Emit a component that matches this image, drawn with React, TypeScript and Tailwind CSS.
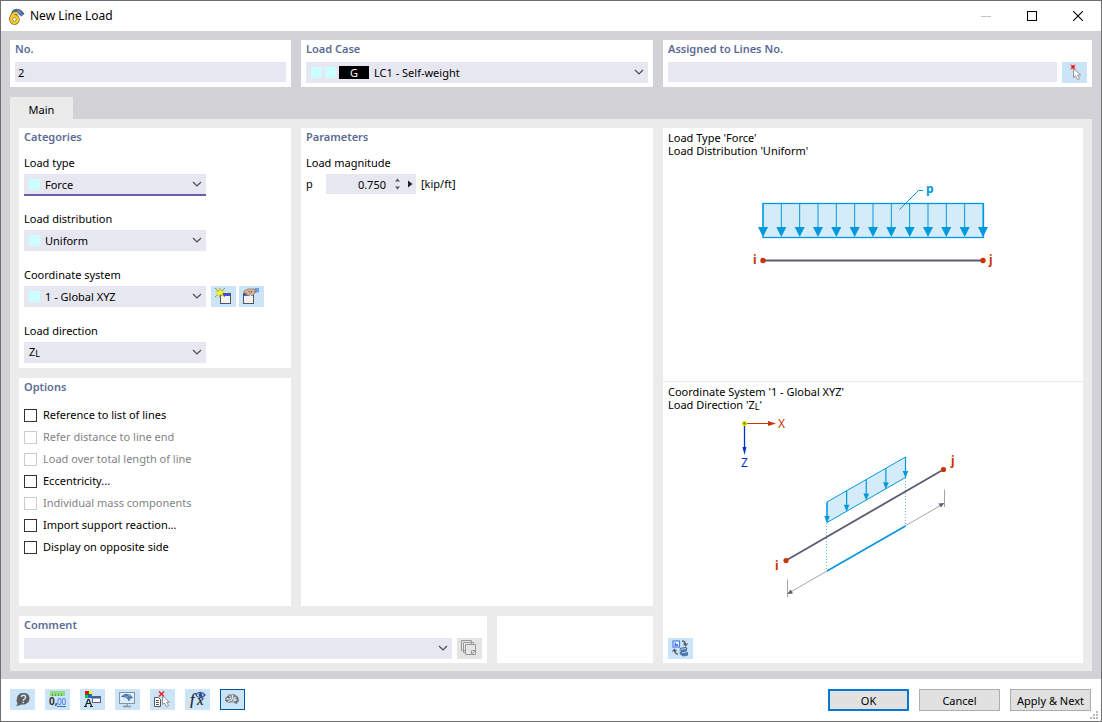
import { useState } from "react"
import type { ReactNode } from "react"

const options = [
  { label: "Reference to list of lines", disabled: false },
  { label: "Refer distance to line end", disabled: true },
  { label: "Load over total length of line", disabled: true },
  { label: "Eccentricity...", disabled: false },
  { label: "Individual mass components", disabled: true },
  { label: "Import support reaction...", disabled: false },
  { label: "Display on opposite side", disabled: false },
]

function Card({ title, className = "", children }: { title?: string; className?: string; children?: ReactNode }) {
  return (
    <section className={`bg-white px-[5px] ${className}`}>
      {title && <h2 className="h-[18px] leading-[18px] font-semibold text-[#5b6b94]">{title}</h2>}
      {children}
    </section>
  )
}

function Swatch() {
  return <span className="h-[11px] w-[11px] bg-[#ccffff]" />
}

// Z with a small subscript L, the local Z axis
function LocalZ() {
  return (
    <>
      Z<sub className="bottom-[-1px] text-[9px]">L</sub>
    </>
  )
}

interface ComboProps {
  id: string
  label?: string
  value: string
  className?: string
  children?: ReactNode
}

function Combo({ id, label, value, className = "", children }: ComboProps) {
  return (
    <div className="relative min-w-0 flex-1">
      <select
        id={id}
        aria-label={label}
        className={`block h-[21px] w-full appearance-none bg-[#e7e7f1] pt-0.5 pr-6 outline-none ${className}`}
      >
        <option aria-label={value || "None"}>{value}</option>
      </select>
      <div className="pointer-events-none absolute inset-y-0 left-[5px] flex items-center gap-[3px]">{children}</div>
      <svg className="pointer-events-none absolute top-[7px] right-[4px]" width="10" height="7" viewBox="0 0 10 7">
        <path d="M1 1L5 5L9 1" fill="none" stroke="#4d4d4d" strokeWidth="1.2" />
      </svg>
    </div>
  )
}

function IconButton({ label, className = "bg-[#cce4f7]", children }: { label: string; className?: string; children: ReactNode }) {
  return (
    <button type="button" aria-label={label} className={`flex h-[21px] w-[25px] shrink-0 items-center justify-center ${className}`}>
      {children}
    </button>
  )
}

function CursorIcon() {
  return (
    <svg width="17" height="17" viewBox="0 0 17 17">
      <path d="M4.500 .5l5 5M9.500 .5l-5 5" stroke="#ff8a8a" strokeWidth="1.200" />
      <path d="M5.500 1.500l3 3M8.500 1.500l-3 3" stroke="#f01010" strokeWidth="1.600" />
      <path d="M7.500 4.500v9l2-1.800 2 4 2-1-1.800-3.700h3z" fill="#fff" stroke="#8a8a8a" strokeWidth=".9" />
    </svg>
  )
}

function ListCursorIcon() {
  return (
    <svg width="17" height="17" viewBox="0 0 17 17">
      <path d="M.5 6.500h4l2 2v7h-6z" fill="#fff" stroke="#555" />
      <path d="M2 9.500h3M2 11.500h3M2 13.500h3" stroke="#555" />
      <path d="M5 .5l5 5M10 .5l-5 5" stroke="#f01818" strokeWidth="1.400" />
      <path d="M8.500 5v8.500l2-1.700 2 4 2-1-1.800-3.600h2.600z" fill="#fff" stroke="#8a8a8a" strokeWidth=".9" />
    </svg>
  )
}

function NewWindowIcon() {
  return (
    <svg width="17" height="17" viewBox="0 0 17 17">
      <rect x="5.500" y="5.500" width="10" height="10" fill="#f4f4f4" stroke="#555" />
      <path d="M6 6h9v2H6z" fill="#3454f0" />
      <path d="M0 0l10 9M10 0L0 9M5 0v10" stroke="#77772c" strokeWidth=".8" />
      <path d="M5 .5l1.200 2.700h3.300L7.300 5.200l.9 3L5 6.600l-3.200 1.600.9-3L.5 3.200h3.300z" fill="#ffff20" stroke="#c2c230" strokeWidth=".5" />
    </svg>
  )
}

function EditWindowIcon() {
  return (
    <svg width="17" height="17" viewBox="0 0 17 17">
      <rect x=".5" y="5.500" width="10" height="10" fill="#f1f1f1" stroke="#555" />
      <path d="M1 6h4v2H1z" fill="#3454f0" />
      <path d="M12 0h4v4l-4 1z" fill="#6f9fdd" />
      <path d="M1 3l4-2h7v4l-2 2-1 1-1.500-1.500L6 8 5 6.500 3.500 8V5.500L1 5z" fill="#d8b49c" stroke="#8e7768" strokeWidth=".8" />
      <path d="M5 3.500h5M6 5l3-.5" stroke="#8e7768" strokeWidth=".7" />
    </svg>
  )
}

function LoadDiagram() {
  const arrows = Array.from({ length: 13 }, (_, i) => 763 + (i * 220) / 12)
  return (
    <svg className="mx-auto mt-5 block" width="240" height="94" viewBox="753 177 240 94">
      <rect x="763" y="203.500" width="220.500" height="34" fill="#d4ecf9" stroke="#0099de" strokeWidth="1.300" />
      {arrows.map((x) => (
        <g key={x} fill="#0099de">
          <path d={`M${x} 203V228`} stroke="#0099de" />
          <path d={`M${x - 5} 227h10l-5 10z`} />
        </g>
      ))}
      <path d="M899.500 209.500L918.500 190.500H923" fill="none" stroke="#0099de" />
      <path d="M763 260.500H983" stroke="#5c5a70" strokeWidth="2" />
      <circle cx="763" cy="260.500" r="2.700" fill="#cc3300" />
      <circle cx="983" cy="260.500" r="2.700" fill="#cc3300" />
      <g fontSize="12" fontWeight="700">
        <text x="926" y="193" fill="#0099de">p</text>
        <text x="753" y="264" fill="#cc3300">i</text>
        <text x="989" y="264" fill="#cc3300">j</text>
      </g>
    </svg>
  )
}

function DirectionDiagram() {
  const arrows = [0, 1, 2, 3, 4].map((i) => ({ x: 827 + i * 19.625, y: 502 - i * 11.25 }))
  return (
    <svg className="mx-auto block" width="268" height="191" viewBox="739 411 268 191">
      <path d="M744.500 423.500H768" stroke="#cc3300" />
      <path d="M768 421v5l8-2.500z" fill="#cc3300" />
      <path d="M744.500 423.500V448" stroke="#0033cc" strokeWidth="1.300" />
      <path d="M742.500 447h4l-2 8z" fill="#0033cc" />
      <circle cx="744.500" cy="423.500" r="2" fill="#59a800" stroke="#ffe600" strokeWidth="1.200" />
      <path d="M827 502L905.500 457V477.500L827 522.500z" fill="#d4ecf9" stroke="#0099de" />
      {arrows.map((a) => (
        <g key={a.x} fill="#0099de">
          <path d={`M${a.x} ${a.y}v14`} stroke="#0099de" strokeWidth="1.200" />
          <path d={`M${a.x - 2.8} ${a.y + 14}h5.600l-2.800 7z`} />
        </g>
      ))}
      <path d="M826.500 523V571M905.500 478V526" stroke="#59bfe9" strokeDasharray="1 2" />
      <path d="M786 560.500L943.500 469.500" stroke="#5c5a70" strokeWidth="1.800" />
      <circle cx="786" cy="560.500" r="2.600" fill="#cc3300" />
      <circle cx="943.500" cy="469.500" r="2.600" fill="#cc3300" />
      <path d="M788 593.500L944 503.500M787.500 579.500V597M944.500 489.500V507" stroke="#8c8b99" strokeWidth=".8" />
      <path d="M787.500 594l3-4.500 2.500 4zM944 503l-3 4.500-2.500-4z" fill="#5c5a70" />
      <path d="M827 571L905.500 526" stroke="#0099de" strokeWidth="1.500" />
      <g fontSize="12">
        <text x="778" y="428" fill="#cc3300">X</text>
        <text x="741" y="467" fill="#0033cc">Z</text>
      </g>
      <g fontSize="12" fontWeight="700" fill="#cc3300">
        <text x="775" y="570">i</text>
        <text x="951" y="465">j</text>
      </g>
    </svg>
  )
}

function TitleBar() {
  return (
    <header className="flex h-[30px] items-center bg-white pl-2 text-xs">
      <svg width="16" height="17" viewBox="0 0 16 17" aria-hidden="true">
        <path d="M2.500 4C5 0 11-1 15.500 6l-3.500 2.500L9 5 3 6z" fill="#416398" />
        <path d="M4 3l8 5M8 1l5 6M13 2L7 6" stroke="#91aacf" strokeWidth=".8" />
        <path d="M8.500 5C4 4.500 2 8 2 11.500" fill="none" stroke="#6f5b20" strokeWidth="3.600" />
        <circle cx="5.500" cy="11.500" r="3.300" fill="#fff" stroke="#6f5b20" strokeWidth="3.800" />
        <path d="M8.500 5C4 4.500 2 8 2 11.500" fill="none" stroke="#f5cd31" strokeWidth="2.200" />
        <circle cx="5.500" cy="11.500" r="3.300" fill="none" stroke="#f5cd31" strokeWidth="2.600" />
      </svg>
      <h1 className="ml-[5px] flex-1">New Line Load</h1>
      <button type="button" aria-label="Minimize" disabled className="flex h-full w-[46px] items-center justify-center">
        <svg width="10" height="10"><path d="M0 5.500H10" stroke="#c4c4c4" /></svg>
      </button>
      <button type="button" aria-label="Maximize" className="flex h-full w-[46px] items-center justify-center">
        <svg width="10" height="10"><rect x=".5" y=".5" width="9" height="9" fill="none" stroke="#000" /></svg>
      </button>
      <button type="button" aria-label="Close" className="flex h-full w-[46px] items-center justify-center">
        <svg width="10" height="10"><path d="M0 0L10 10M10 0L0 10" stroke="#000" strokeWidth="1.100" /></svg>
      </button>
    </header>
  )
}

function Toolbar() {
  return (
    <div className="flex flex-1 gap-2.5">
      <IconButton label="Help">
        <svg width="15" height="15" viewBox="0 0 15 15">
          <path d="M8.500 1c4 0 6 2 6 5.500s-3 6-6 6c-2 0-3 0-4.500 1l-3 .5c1-1 1.500-2 1.500-3C1 9.500 1.500 8 2 6.500c0-3.500 3-5.500 6.500-5.500z" fill="#606060" />
          <path d="M6.500 5C6.500 2.500 11 2.500 10.500 5.500c0 1.500-2.200 1.500-2.200 3.200M8.300 9.700v1.500" fill="none" stroke="#cce4f7" strokeWidth="1.500" />
        </svg>
      </IconButton>
      <IconButton label="Units and Decimal Places">
        <svg width="17" height="17" viewBox="0 0 17 17">
          <path d="M1 0h15v5H1z" fill="#8fdd80" />
          <path d="M3.500 3v2M6.500 3v2M9.500 3v2M12.500 3v2" stroke="#52a448" />
          <text x="0" y="14" fontSize="10" fontWeight="600" fill="#222">0,</text>
          <text x="8" y="14" fontSize="8" fill="#336de0">00</text>
          <path d="M8 15.500h9" stroke="#336de0" />
        </svg>
      </IconButton>
      <IconButton label="Display Properties">
        <svg width="17" height="17" viewBox="0 0 17 17">
          <rect x="1" y="0" width="7" height="7" fill="#555" />
          <path d="M1 0h3v3H1z" fill="#f00" />
          <path d="M5 0h3v3H5z" fill="#ff0" />
          <path d="M1 4h3v3H1z" fill="#00c850" />
          <path d="M5 4h3v3H5z" fill="#16f" />
          <path d="M1.500 15L4 8.500h1L7.500 15M3 12.500h3.500M0 15.500h3M6 15.500h3" fill="none" stroke="#222" strokeWidth="1.200" />
          <rect x="8.500" y="5.500" width="8" height="6" fill="#fff" stroke="#5c627c" />
          <path d="M9 6h7v1.500H9z" fill="#3855b0" />
        </svg>
      </IconButton>
      <IconButton label="Visibility">
        <svg width="17" height="17" viewBox="0 0 17 17">
          <rect x=".5" y="1.500" width="15" height="11" fill="#dceefa" stroke="#87949e" />
          <path d="M8 13v2M4 15.500h8" stroke="#87949e" strokeWidth="1.300" />
          <path d="M2 6c3-4.500 9-4 12 1l-2.500.5c0 1-1 2-2 3C9.500 8 7 6 2 6z" fill="#426ba7" />
          <path d="M4.500 4l7 5M8.500 3l4 5M6 6.500l6-3" stroke="#91b1d4" strokeWidth=".7" />
        </svg>
      </IconButton>
      <IconButton label="Select Objects"><ListCursorIcon /></IconButton>
      <IconButton label="Formula">
        <svg width="17" height="17" viewBox="0 0 17 17">
          <g fontFamily="Liberation Serif, serif" fontStyle="italic" fill="#222" stroke="#222" strokeWidth=".2">
            <text x="1" y="14" fontSize="16">f</text>
            <text x="8" y="14" fontSize="15">x</text>
          </g>
          <path d="M7 4c2-3.500 6-3.500 9 0-3 3.500-7 3.500-9 0z" fill="#e4efff" stroke="#354b91" strokeWidth="1.200" />
          <circle cx="11.500" cy="4" r="1.900" fill="#25458d" />
        </svg>
      </IconButton>
      <IconButton label="Intelligent Input" className="border border-[#005499] bg-[#cce4f7]">
        <svg width="17" height="13" viewBox="0 0 17 13">
          <path d="M1.500 7.500C.5 6 1.500 3.500 3.500 3.500 3.500 1.500 6 .8 7.500 1.800 9 .5 11 1 11.500 2.500c2 0 3 1.300 2.800 2.700 1.500 1.500 1 3.600-.8 4 0 1.600-1.500 2.300-2.500 1.500C10 9.500 9 9 7.500 9.200 6 10.500 2.500 10 1.500 7.500z" fill="#85898d" />
          <path d="M2.500 6.500c1.500-1.500 3 .5 4.500-1.500M5 3c1 0 1.500.5 1.500 1.500M8.500 2v3c0 1.500-1.500 1.500-1.500 3M4 9c.5-1 1.500-1.300 2.500-1M11.500 3c0 1.500-1 1.500-1.500 2.500s1 1.500 2.500.5M9 8.500c1-1.500 2-1 3.500-1.500" fill="none" stroke="#d8eaf8" strokeWidth="1.100" />
          <path d="M3.500 3.500c1.500 0 2 .5 2 1.500M1.500 7.500c1 .8 2 .6 3 0M11.500 2.500l-.5 1.500M14.300 5.200l-1.800.8M13.500 9.200l-1.500-1" fill="none" stroke="#4f5357" strokeWidth=".9" />
        </svg>
      </IconButton>
    </div>
  )
}

export default function App() {
  const [lineNo, setLineNo] = useState("2")
  const [magnitude, setMagnitude] = useState("0.750")
  const [assigned, setAssigned] = useState("")

  return (
    <main className="flex min-h-screen flex-col border border-[#6f6f6f] bg-[#d2d1d6] font-['Noto_Sans','Open_Sans',sans-serif] text-[11px] text-black">
      <TitleBar />

      <div className="flex flex-1 flex-col px-[9px] pt-[9px] pb-2">
        <div className="flex gap-2.5">
          <Card title="No." className="h-[47px] w-[281px]">
            <input
              aria-label="No."
              className="mt-1 block h-5 w-full bg-[#e7e7f1] px-[3px] outline-none"
              value={lineNo}
              onChange={(e) => setLineNo(e.target.value)}
            />
          </Card>
          <Card title="Load Case" className="h-[47px] w-[352px]">
            <div className="mt-1 flex">
              <Combo id="load-case" label="Load Case" value="LC1 - Self-weight" className="pl-[68px]">
                <Swatch />
                <Swatch />
                <span className="h-[13px] w-[30px] bg-black text-center leading-[14px] text-white">G</span>
              </Combo>
            </div>
          </Card>
          <Card title="Assigned to Lines No." className="h-[47px] flex-1">
            <div className="mt-1 flex items-start gap-[5px]">
              <input
                aria-label="Assigned to Lines No."
                className="h-5 min-w-0 flex-1 bg-[#e7e7f1] px-[3px] outline-none"
                value={assigned}
                onChange={(e) => setAssigned(e.target.value)}
              />
              <IconButton label="Select lines"><CursorIcon /></IconButton>
            </div>
          </Card>
        </div>

        <div role="tablist" className="mt-2.5 flex">
          <button type="button" role="tab" aria-selected="true" className="h-[22px] w-[63px] bg-[#ebebeb] pt-1 leading-[18px]">
            Main
          </button>
        </div>

        <div className="flex flex-1 gap-2.5 bg-[#ebebeb] px-[9px] pt-[9px] pb-2">
          <div className="flex w-[634px] flex-col gap-2.5">
            <div className="flex flex-1 gap-2.5">
              <div className="flex w-[272px] flex-col gap-2.5">
                <Card title="Categories" className="h-60">
                  <div className="mt-[9px] flex flex-col gap-4">
                    <div>
                      <label htmlFor="load-type" className="mb-[3px] block leading-4">Load type</label>
                      <div className="flex w-[182px]">
                        <Combo
                          id="load-type"
                          value="Force"
                          className="border-b border-[#6661a6] pl-[21px] shadow-[0_1px_0_#6661a6]"
                        >
                          <Swatch />
                        </Combo>
                      </div>
                    </div>
                    <div>
                      <label htmlFor="load-distribution" className="mb-[3px] block leading-4">Load distribution</label>
                      <div className="flex w-[182px]">
                        <Combo id="load-distribution" value="Uniform" className="pl-[21px]"><Swatch /></Combo>
                      </div>
                    </div>
                    <div>
                      <label htmlFor="coordinate-system" className="mb-[3px] block leading-4">Coordinate system</label>
                      <div className="flex">
                        <div className="mr-[5px] flex w-[182px]">
                          <Combo id="coordinate-system" value="1 - Global XYZ" className="pl-[21px]"><Swatch /></Combo>
                        </div>
                        <div className="flex gap-[3px]">
                          <IconButton label="New coordinate system"><NewWindowIcon /></IconButton>
                          <IconButton label="Edit coordinate system"><EditWindowIcon /></IconButton>
                        </div>
                      </div>
                    </div>
                    <div>
                      <label htmlFor="load-direction" className="mb-[3px] block leading-4">Load direction</label>
                      <div className="flex w-[182px]">
                        <Combo id="load-direction" value="">
                          <span><LocalZ /></span>
                        </Combo>
                      </div>
                    </div>
                  </div>
                </Card>

                <Card title="Options" className="flex-1">
                  <div className="mt-2">
                    {options.map((o) => (
                      <label key={o.label} className={`flex h-[22px] items-center gap-1.5 ${o.disabled ? "text-[#838383]" : ""}`}>
                        <input
                          type="checkbox"
                          disabled={o.disabled}
                          className="h-[13px] w-[13px] appearance-none border border-[#333333] bg-white checked:bg-[#6661a6] disabled:border-[#cccccc]"
                        />
                        {o.label}
                      </label>
                    ))}
                  </div>
                </Card>
              </div>

              <Card title="Parameters" className="flex-1">
                <label htmlFor="magnitude" className="mt-[9px] mb-[3px] block leading-4">Load magnitude</label>
                <div className="flex items-center">
                  <span className="w-5">p</span>
                  <div className="flex h-5 w-[90px] items-center bg-[#e7e7f1]">
                    <input
                      id="magnitude"
                      className="h-5 w-[60px] bg-transparent text-right outline-none"
                      value={magnitude}
                      onChange={(e) => setMagnitude(e.target.value)}
                    />
                    <button type="button" aria-label="Step value" className="ml-2 w-[9px]">
                      <svg width="7" height="12" viewBox="0 0 7 12">
                        <path d="M1 3.500L3.500 .5L6 3.500zM1 8.500L3.500 11.500L6 8.500z" fill="#555" />
                      </svg>
                    </button>
                    <button type="button" aria-label="More" className="ml-[5px]">
                      <svg width="5" height="8" viewBox="0 0 5 8"><path d="M0 .5L4.500 4L0 7.500z" fill="#222" /></svg>
                    </button>
                  </div>
                  <span className="ml-[5px]">[kip/ft]</span>
                </div>
              </Card>
            </div>

            <div className="flex h-[47px] gap-2.5">
              <Card title="Comment" className="w-[468px]">
                <div className="mt-1 flex gap-[5px]">
                  <Combo id="comment" label="Comment" value="" />
                  <IconButton label="Comment library" className="bg-[#e5e5e5]">
                    <svg width="17" height="17" viewBox="0 0 17 17">
                      <g fill="#e5e5e5" stroke="#999">
                        <path d="M.5 .5h10v10H.5zM2.500 2.500h10v10h-10z" />
                        <path d="M4.500 4.500h10v10h-10z" />
                        <path d="M10.500 10.500h4v4h-4zM11 14l3-3" />
                      </g>
                    </svg>
                  </IconButton>
                </div>
              </Card>
              <Card className="flex-1" />
            </div>
          </div>

          <div className="flex flex-1 flex-col bg-white">
            <div className="h-[254px] border-b border-[#ebebeb] px-[5px] pt-[3px] leading-[13px]">
              <p>Load Type 'Force'</p>
              <p>Load Distribution 'Uniform'</p>
              <LoadDiagram />
            </div>
            <div className="flex flex-1 flex-col px-[5px] pt-[3px] pb-1 leading-[13px]">
              <p>Coordinate System '1 - Global XYZ'</p>
              <p>Load Direction '<LocalZ />'</p>
              <DirectionDiagram />
              <div className="mt-auto">
                <IconButton label="Switch view">
                  <svg width="17" height="17" viewBox="0 0 17 17">
                    <rect x="1" y="1" width="6.500" height="6" fill="#fff" stroke="#4a7be8" strokeWidth="1.200" />
                    <path d="M2.500 2.500H4V4h2v2H2.500z" fill="#4a7be8" />
                    <path d="M10 1c2.500 0 3.500 1.500 3.500 4M11.500 3.500l2 2 2-2M2.500 10c0 3 1 4 3.500 4M.5 11.500l2-2 2 2" fill="none" stroke="#58616a" strokeWidth="1.300" />
                    <path d="M8 8l6-1.500 1.500 2-1 2.500 1.500 1.500v3l-5 1L7.500 14l1-2.500z" fill="#4f76a6" />
                    <path d="M7.500 8.500v5.500M9 9.500l5-1.200M10 13l5-1.200" stroke="#b3cbe6" strokeWidth="1" />
                  </svg>
                </IconButton>
              </div>
            </div>
          </div>
        </div>
      </div>

      <footer className="relative flex h-[42px] items-start bg-white pt-2.5 pr-2.5 pl-[9px]">
        <Toolbar />
        <div className="flex gap-2.5">
          <button type="button" className="h-[22px] w-[81px] border-2 border-[#0078d7] bg-[#e1e1e1] pt-0.5">OK</button>
          <button type="button" className="h-[22px] w-[81px] border border-[#adadad] bg-[#e1e1e1] pt-0.5">Cancel</button>
          <button type="button" className="h-[22px] w-[81px] border border-[#adadad] bg-[#e1e1e1] pt-0.5 whitespace-nowrap">Apply &amp; Next</button>
        </div>
        <svg className="absolute right-[3px] bottom-[2px]" width="8" height="8" viewBox="0 0 8 8">
          <path d="M6 0h2v2H6zM3 3h2v2H3zM6 3h2v2H6zM0 6h2v2H0zM3 6h2v2H3zM6 6h2v2H6z" fill="#b9b9b9" />
        </svg>
      </footer>
    </main>
  )
}
